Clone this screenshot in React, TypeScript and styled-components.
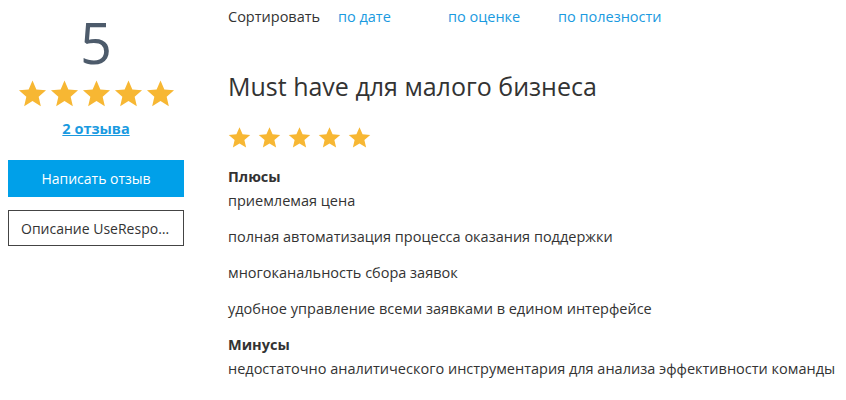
import React from "react";
import styled, { createGlobalStyle } from "styled-components";

const Global = createGlobalStyle`
  html, body { margin: 0; padding: 0; background: #fff; }
  body { font-family: "Open Sans", "Noto Sans", Arial, sans-serif; color: #333; }
  * { box-sizing: border-box; }
`;

const Page = styled.div`
  display: flex;
  align-items: flex-start;
  padding: 0 8px;
  width: 846px;
  height: 400px;
`;

const Side = styled.aside`
  width: 176px;
  display: flex;
  flex-direction: column;
  align-items: center;
`;

const BigScore = styled.div`
  font-size: 56px;
  line-height: 1;
  color: #4d5b6b;
  margin-top: 14px;
  height: 65px;
`;

const Stars = styled.div<{ $gap: number }>`
  display: flex;
  gap: ${(p) => p.$gap}px;
`;

const Count = styled.a`
  margin-top: 11px;
  font-size: 14.5px;
  font-weight: 700;
  color: #1a9ae0;
  text-decoration: underline;
`;

const PrimaryButton = styled.button`
  margin-top: 22px;
  width: 100%;
  height: 37px;
  border: none;
  background: #00a0e9;
  color: #fff;
  font-family: inherit;
  font-size: 14px;
`;

const OutlineButton = styled.button`
  margin-top: 13px;
  width: 100%;
  height: 36px;
  border: 1px solid #444;
  background: #fff;
  color: #333;
  font-family: inherit;
  font-size: 14px;
  text-align: left;
  padding: 0 12px;
  white-space: nowrap;
  overflow: hidden;
  text-overflow: ellipsis;
`;

const Main = styled.main`
  margin-left: 44px;
  display: flex;
  flex-direction: column;
`;

const SortBar = styled.div`
  display: flex;
  font-size: 14.5px;
  line-height: 20px;
  margin-top: 7px;
`;

const SortLabel = styled.span`
  width: 110px;
  color: #333;
`;

const SortLink = styled.a`
  width: 110px;
  color: #1a9ae0;
  text-decoration: none;
`;

const Title = styled.h1`
  margin: 42px 0 0;
  font-size: 25px;
  font-weight: 400;
  line-height: 34px;
  color: #333;
`;

const ReviewStars = styled.div`
  margin-top: 23px;
`;

const SectionHead = styled.div<{ $gap: number }>`
  margin-top: ${(p) => p.$gap}px;
  font-size: 14.5px;
  font-weight: 700;
  line-height: 20px;
  color: #333;
`;

const Item = styled.div<{ $first?: boolean }>`
  margin-top: ${(p) => (p.$first ? 4 : 16)}px;
  font-size: 14.5px;
  line-height: 20px;
  color: #333;
`;

const Star = ({ size }: { size: number }) => (
  <svg width={size} height={size} viewBox="0 0 24 24">
    <path
      fill="#f7b733"
      d="M12 1.2l3.2 7.4 8 .7-6.1 5.3 1.8 7.9L12 18.3l-6.9 4.2 1.8-7.9L.8 9.3l8-.7z"
    />
  </svg>
);

const StarRow = ({ size, gap }: { size: number; gap: number }) => (
  <Stars $gap={gap}>
    {[0, 1, 2, 3, 4].map((i) => (
      <Star key={i} size={size} />
    ))}
  </Stars>
);

export default function App() {
  return (
    <>
      <Global />
      <Page>
        <Side>
          <BigScore>5</BigScore>
          <StarRow size={29} gap={3} />
          <Count href="#">2 отзыва</Count>
          <PrimaryButton>Написать отзыв</PrimaryButton>
          <OutlineButton>Описание UseResponse</OutlineButton>
        </Side>
        <Main>
          <SortBar>
            <SortLabel>Сортировать</SortLabel>
            <SortLink href="#">по дате</SortLink>
            <SortLink href="#">по оценке</SortLink>
            <SortLink href="#">по полезности</SortLink>
          </SortBar>
          <Title>Must have для малого бизнеса</Title>
          <ReviewStars>
            <StarRow size={23} gap={7} />
          </ReviewStars>
          <SectionHead $gap={18}>Плюсы</SectionHead>
          <Item $first>приемлемая цена</Item>
          <Item>полная автоматизация процесса оказания поддержки</Item>
          <Item>многоканальность сбора заявок</Item>
          <Item>удобное управление всеми заявками в едином интерфейсе</Item>
          <SectionHead $gap={16}>Минусы</SectionHead>
          <Item $first>недостаточно аналитического инструментария для анализа эффективности команды</Item>
        </Main>
      </Page>
    </>
  );
}
